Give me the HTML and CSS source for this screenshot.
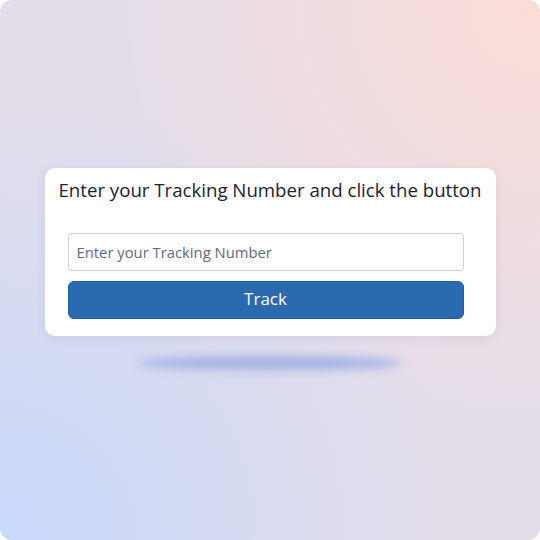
FILE: index.html
```html
<!DOCTYPE html>
<html lang="en">
<head>
    <meta charset="UTF-8">
    <meta name="viewport" content="width=device-width, initial-scale=1.0">
    <title>Track your parcel</title>
    <link rel="stylesheet" href="styles.css">
</head>
<body>
    <div class="stage">
        <div class="track-card">
            <h1 class="track-title">Enter your Tracking Number and click the button</h1>
            <form class="track-form">
                <input type="text" class="track-input" placeholder="Enter your Tracking Number">
                <button type="button" class="track-button">Track</button>
            </form>
        </div>
        <div class="floor-shadow"></div>
    </div>
</body>
</html>
```

FILE: styles.css
```css
* {
    margin: 0;
    padding: 0;
    box-sizing: border-box;
}
body {
    background: white;
    width: 540px;
    height: 540px;
    overflow: hidden;
    font-family: 'Open Sans', sans-serif;
}
.stage {
    width: 540px;
    height: 540px;
    border-radius: 12px;
    background:
        radial-gradient(circle at 100% 0%, #fbdcd6 0%, rgba(251, 220, 214, 0) 55%),
        radial-gradient(circle at 0% 100%, #c8d9fc 0%, rgba(200, 217, 252, 0) 60%),
        #e4dde9;
    display: flex;
    flex-direction: column;
    align-items: center;
    padding-top: 168px;
}
.track-card {
    width: 451px;
    height: 168px;
    background: white;
    border-radius: 10px;
    box-shadow: 0 2px 10px rgba(120, 110, 150, 0.12);
    padding-top: 10px;
    display: flex;
    flex-direction: column;
    align-items: center;
}
.track-title {
    font-size: 18.65px;
    font-weight: 400;
    color: #1c2230;
    line-height: 24px;
    white-space: nowrap;
}
.track-form {
    align-self: flex-start;
    width: 396px;
    margin: 31px 0 0 23px;
    display: flex;
    flex-direction: column;
    gap: 10px;
}
.track-input {
    height: 38px;
    border: 1px solid #cfcfd4;
    border-radius: 4px;
    padding: 0 8px;
    font-family: 'Open Sans', sans-serif;
    font-size: 14.8px;
    color: #333;
    outline: none;
}
.track-input::placeholder {
    color: #5b6984;
}
.track-button {
    height: 38px;
    padding-bottom: 3px;
    background: #2a6bb0;
    border: 1px solid #1d5ca6;
    border-radius: 6px;
    color: white;
    font-family: 'Open Sans', sans-serif;
    font-size: 17px;
    font-weight: 500;
    cursor: pointer;
}
.floor-shadow {
    width: 264px;
    height: 14px;
    margin-top: 20px;
    border-radius: 50%;
    background: #a4b1e2;
    filter: blur(5px);
}
```
